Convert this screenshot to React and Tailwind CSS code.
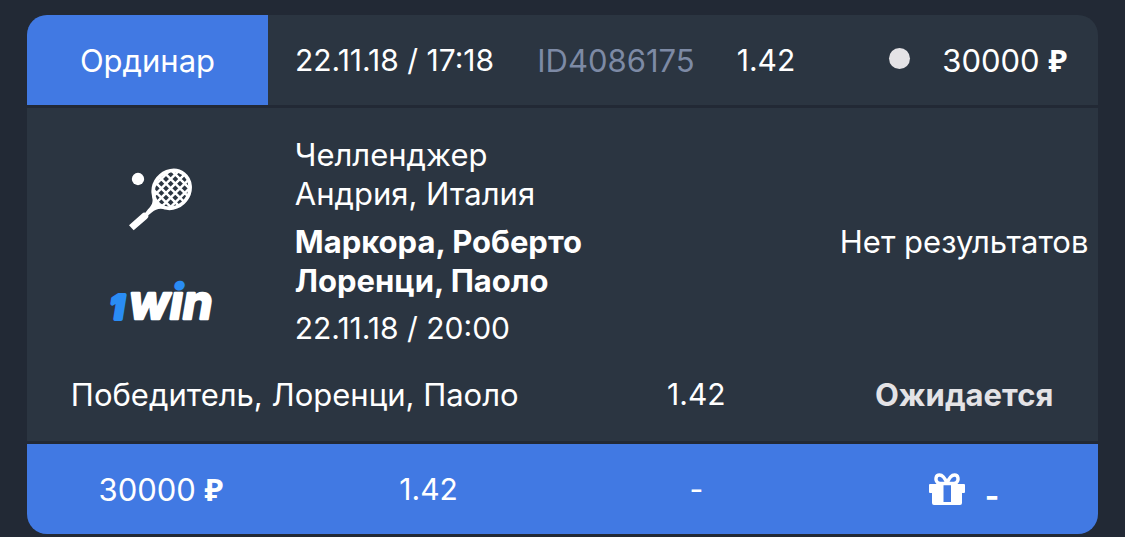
function Racket() {
  return (
    <svg className="h-[64px] w-[64px]" viewBox="90 54 192 192" role="img" aria-label="Теннис">
      <clipPath id="face">
        <ellipse cx="218" cy="118" rx="53" ry="59" transform="rotate(38 218 118)" />
      </clipPath>
      <circle cx="117" cy="87" r="18.5" fill="#fff" />
      <ellipse cx="218" cy="118" rx="53" ry="59" transform="rotate(38 218 118)" fill="none" stroke="#fff" strokeWidth="11" />
      <g clipPath="url(#face)" stroke="#fff" strokeWidth="7.5">
        <path d="M110 164 238 36M138 164 266 36M152 178 294 36M166 192 308 50M184 202 308 78M126 54 266 194M154 54 294 194M182 54 308 180M210 54 308 152M112 68 238 194M112 96 210 194" />
      </g>
      <path d="M159 138C164 158 158 166 147 178L139 188Q134 186 129 191L90 226 104 241 144 206Q150 202 148 196L159 187C170 177 182 174 200 178L182 168 168 152Z" fill="#fff" />
    </svg>
  );
}

function Logo() {
  return (
    <svg
      className="h-[44px] w-[108px] overflow-visible"
      viewBox="0 0 108 44"
      fontFamily="Inter, sans-serif"
      fontStyle="italic"
      strokeLinejoin="round"
      role="img"
      aria-label="1win"
    >
      <linearGradient id="dot" gradientUnits="userSpaceOnUse" x1="0" y1="0" x2="0" y2="44">
        <stop offset="0.25" stopColor="#2a8cf4" />
        <stop offset="0.25" stopColor="#fff" />
      </linearGradient>
      <text x="3" y="39" fontSize="32" fontWeight="800" fill="#2a8cf4" stroke="#2a8cf4" strokeWidth="4">1</text>
      <text x="22" y="39" fontSize="48" fontWeight="700" fill="url(#dot)" stroke="url(#dot)" strokeWidth="2.6">win</text>
    </svg>
  );
}

function Gift() {
  return (
    <svg className="h-[32px] w-[36px]" viewBox="0 0 36 32" aria-hidden="true">
      <path d="M1 11H35Q36 11 36 12V19Q36 20 35 20H33V30Q33 32 31 32H5Q3 32 3 30V20H1Q0 20 0 19V12Q0 11 1 11Z" fill="#fff" />
      <path d="M14.5 11H22V29H14.5Z" fill="#4179e3" />
      <path
        d="M18 10.500C16 5 13.500 2 10.500 2C6.500 2 6 7 8.500 9.500C10 11 14 10.500 18 10.500ZM18 10.500C20 5 22.500 2 25.500 2C29.500 2 30 7 27.500 9.500C26 11 22 10.500 18 10.500Z"
        fill="none"
        stroke="#fff"
        strokeWidth="3.4"
        strokeLinejoin="round"
      />
    </svg>
  );
}

function Amount({ value }) {
  return (
    <span className="whitespace-nowrap">
      {value} <span className="font-['Noto_Sans',sans-serif] font-bold">₽</span>
    </span>
  );
}

export default function App() {
  return (
    <main className="min-h-screen bg-[#222935] px-[27px] pt-[15px] font-['Inter',sans-serif] text-[31px] leading-[39px] text-white">
      <article className="flex flex-col gap-[3px] overflow-hidden rounded-[20px]">
        <header className="grid h-[90px] grid-cols-[241fr_244fr_208fr_92fr_286fr] items-center bg-[#2b3541]">
          <div className="flex h-full items-center justify-center bg-[#4179e3]">Ординар</div>
          <time className="whitespace-nowrap pl-[27px] text-[30px]">22.11.18 / 17:18</time>
          <span className="text-center text-[#7d8aa5]">ID4086175</span>
          <span className="text-center text-[30px]">1.42</span>
          <div className="flex items-center justify-end gap-8 pr-[31px]">
            <span className="mb-1 size-[21px] rounded-full bg-[#e4e3e6]" />
            <Amount value="30000" />
          </div>
        </header>

        <section className="flex flex-col gap-[27px] bg-[#2b3541] py-[27px]">
          <div className="grid grid-cols-4 items-center">
            <div className="flex flex-col items-center gap-12 pt-2">
              <Racket />
              <Logo />
            </div>
            <div className="col-span-2 flex flex-col gap-[9px]">
              <p>
                Челленджер
                <br />
                Андрия, Италия
              </p>
              <p className="font-bold">
                Маркора, Роберто
                <br />
                Лоренци, Паоло
              </p>
              <time className="text-[30px]">22.11.18 / 20:00</time>
            </div>
            <p className="whitespace-nowrap text-center">Нет результатов</p>
          </div>
          <div className="grid grid-cols-4 text-center">
            <p className="col-span-2">Победитель, Лоренци, Паоло</p>
            <p className="text-[30px]">1.42</p>
            <p className="font-bold text-[#e4e3e6]">Ожидается</p>
          </div>
        </section>

        <footer className="grid h-[90px] grid-cols-4 items-center bg-[#4179e3] text-center">
          <Amount value="30000" />
          <span className="text-[30px]">1.42</span>
          <span className="text-[30px]">-</span>
          <div className="flex items-center justify-center gap-5">
            <Gift />
            <span className="pt-3 font-bold">-</span>
          </div>
        </footer>
      </article>
    </main>
  );
}
